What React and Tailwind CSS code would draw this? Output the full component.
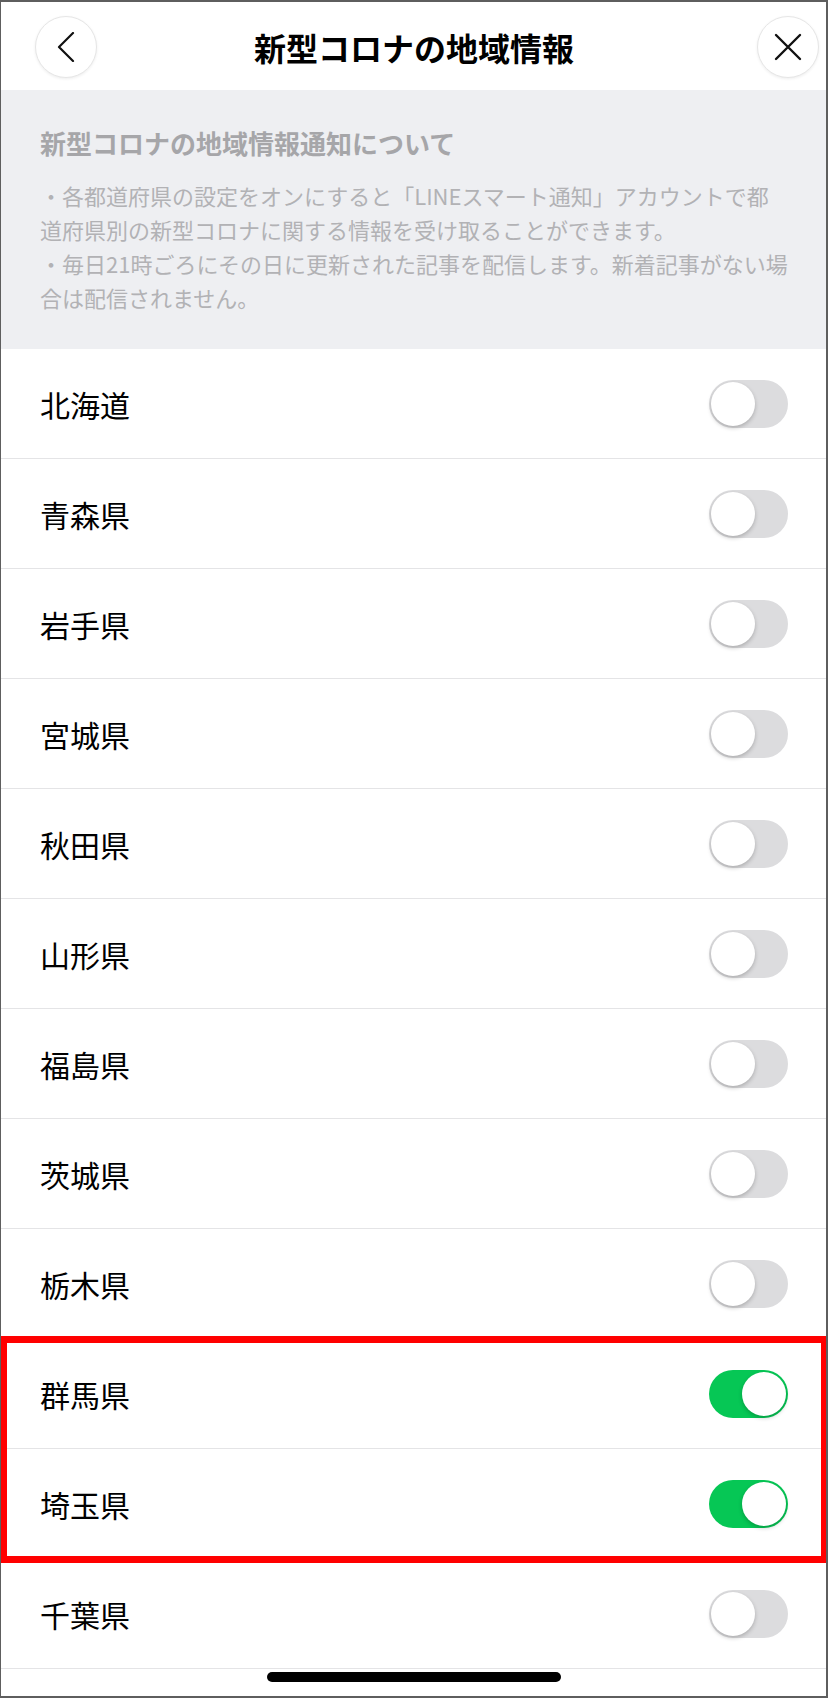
import React from "react";

const prefectures = [
  { name: "北海道", on: false },
  { name: "青森県", on: false },
  { name: "岩手県", on: false },
  { name: "宮城県", on: false },
  { name: "秋田県", on: false },
  { name: "山形県", on: false },
  { name: "福島県", on: false },
  { name: "茨城県", on: false },
  { name: "栃木県", on: false },
  { name: "群馬県", on: true },
  { name: "埼玉県", on: true },
  { name: "千葉県", on: false },
];

function Toggle({ on }) {
  return (
    <div
      className={
        "flex h-[48px] w-[79px] items-center rounded-full p-[2px] " +
        (on ? "justify-end bg-[#06c755]" : "justify-start bg-[#dcdcde]")
      }
    >
      <div className="h-[44px] w-[44px] rounded-full bg-white shadow-[0_2px_4px_rgba(0,0,0,0.22)]" />
    </div>
  );
}

export default function App() {
  return (
    <div
      className="relative h-[1698px] w-[828px] overflow-hidden border-[2px] border-l-[1px] border-[#5e5e5e] bg-white"
      style={{ fontFamily: '"Noto Sans CJK JP", "Noto Sans", sans-serif' }}
    >
      {/* Header */}
      <div className="flex h-[88px] items-center pl-[34px] pr-[7px] pt-[2px]">
        <button className="flex h-[62px] w-[62px] items-center justify-center rounded-full border border-[#e6e6e6] bg-white shadow-[0_1px_3px_rgba(0,0,0,0.07)]">
          <svg width="18" height="30" viewBox="0 0 18 30" fill="none">
            <path d="M16 1 L2 15 L16 29" stroke="#111" strokeWidth="2.2" strokeLinecap="round" strokeLinejoin="round" />
          </svg>
        </button>
        <div className="flex-1 pr-[26px] text-center text-[32px] font-bold leading-none text-black">
          新型コロナの地域情報
        </div>
        <button className="flex h-[62px] w-[62px] items-center justify-center rounded-full border border-[#e6e6e6] bg-white shadow-[0_1px_3px_rgba(0,0,0,0.07)]">
          <svg width="28" height="28" viewBox="0 0 28 28" fill="none">
            <path d="M2 2 L26 26 M26 2 L2 26" stroke="#111" strokeWidth="2.4" strokeLinecap="round" />
          </svg>
        </button>
      </div>

      {/* Info */}
      <div className="bg-[#eeeff2] pb-[35px] pl-[39px] pr-[38px] pt-[35px]">
        <div className="text-[26px] font-bold leading-[36px] text-[#a6a6a9]">
          新型コロナの地域情報通知について
        </div>
        <div className="mt-[17px] whitespace-nowrap text-[22px] leading-[34px] text-[#b2b2b5]">
          ・各都道府県の設定をオンにすると「LINEスマート通知」アカウントで都
          <br />
          道府県別の新型コロナに関する情報を受け取ることができます。
          <br />
          ・毎日21時ごろにその日に更新された記事を配信します。新着記事がない場
          <br />
          合は配信されません。
        </div>
      </div>

      {/* List */}
      <div>
        {prefectures.map((p) => (
          <div
            key={p.name}
            className="flex h-[110px] items-center justify-between border-b border-[#e4e4e6] pl-[39px] pr-[38px]"
          >
            <span className="text-[30px] leading-none text-black">{p.name}</span>
            <Toggle on={p.on} />
          </div>
        ))}
      </div>

      {/* Home indicator */}
      <div className="mx-auto mt-[3px] h-[10px] w-[294px] rounded-full bg-black" />

      {/* Red highlight annotation */}
      <div className="pointer-events-none absolute left-[-1px] right-[-2px] top-[1334px] h-[227px] border-[7px] border-[#ff0000]" />
    </div>
  );
}
